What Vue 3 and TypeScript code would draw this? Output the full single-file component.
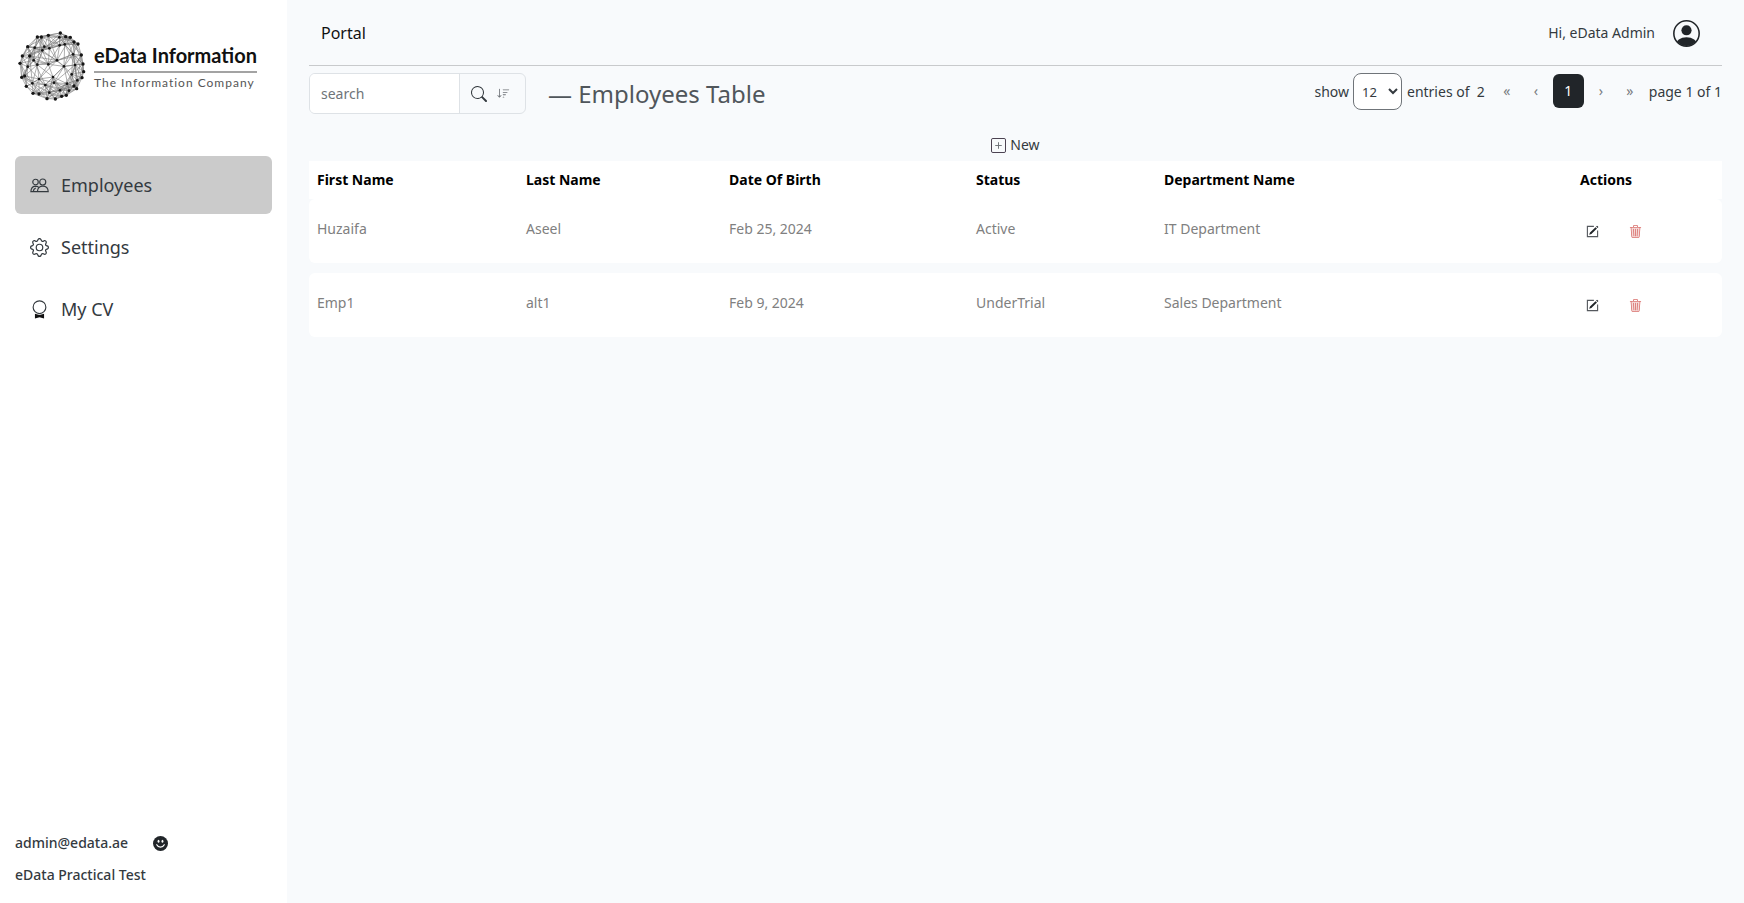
<script setup lang="ts">
import { computed, ref } from 'vue'

interface Employee {
  firstName: string
  lastName: string
  birth: string
  status: string
  department: string
}

const columns = ['First Name', 'Last Name', 'Date Of Birth', 'Status', 'Department Name', 'Actions']

const employees = ref<Employee[]>([
  { firstName: 'Huzaifa', lastName: 'Aseel', birth: 'Feb 25, 2024', status: 'Active', department: 'IT Department' },
  { firstName: 'Emp1', lastName: 'alt1', birth: 'Feb 9, 2024', status: 'UnderTrial', department: 'Sales Department' },
])

const query = ref('')
const pageSize = ref(12)

const visible = computed(() =>
  employees.value.filter((e) => Object.values(e).join(' ').toLowerCase().includes(query.value.toLowerCase())),
)

// Nodes of the logo's wireframe sphere: the outline first, then the inside.
const rim: number[][] = [
  [152, 24], [168, 35], [182, 37], [193, 51], [205, 57], [215, 90], [220, 117], [222, 140], [217, 158],
  [201, 191], [193, 183], [170, 211], [156, 214], [137, 222], [112, 221], [88, 207], [70, 205], [50, 184],
  [36, 157], [45, 153], [31, 115], [38, 93], [54, 65], [60, 93], [83, 36], [95, 36], [116, 31],
]
const inner: number[][] = [
  [72, 106], [142, 106], [150, 61], [165, 58], [104, 65], [119, 70], [98, 76], [116, 118], [83, 119],
  [163, 124], [186, 148], [88, 162], [133, 173], [172, 176], [151, 196], [107, 180], [130, 156],
  [190, 88], [196, 120], [203, 166], [75, 68], [149, 37], [54, 125], [119, 203], [178, 197], [68, 175],
]
const nodes = [...rim, ...inner]
const edges: number[][] = []
nodes.forEach((a, i) => {
  nodes.forEach((b, j) => {
    const reach = (i + j) % 3 === 0 ? 84 : 48
    if (j > i && Math.hypot(a[0] - b[0], a[1] - b[1]) < reach) edges.push([...a, ...b])
  })
})
</script>

<template>
  <div class="layout">
    <aside class="sidebar">
      <div class="brand">
        <svg class="globe" viewBox="26 18 202 210" aria-hidden="true">
          <g stroke="#222" stroke-width="1.8" opacity="0.6">
            <line v-for="(e, i) in edges" :key="i" :x1="e[0]" :y1="e[1]" :x2="e[2]" :y2="e[3]" />
          </g>
          <circle v-for="(n, i) in nodes" :key="i" :cx="n[0]" :cy="n[1]" :r="i < rim.length ? 5 : 4" fill="#151515" />
        </svg>
        <div class="brand-text">
          <span class="brand-name">eData Information</span>
          <span class="brand-tag">The Information Company</span>
        </div>
      </div>

      <nav class="menu">
        <a href="#employees" class="menu-item active" aria-current="page">
          <svg viewBox="0 0 20 20" fill="none" stroke="currentColor" stroke-width="1.2">
            <circle cx="5.800" cy="6.300" r="2.900" />
            <circle cx="13.400" cy="6.300" r="3.200" />
            <path d="M7.800 16.500c.2-4 2.200-5.900 5.700-5.900s5.500 1.900 5.700 5.900zM7.800 16.500H.9c.2-3.600 1.700-5.500 4.500-5.900 1.400 0 2.400.2 3.500 1" />
            <path d="M3.500 16.500c0-2 .9-3.300 2.600-3.900" />
          </svg>
          <span>Employees</span>
        </a>
        <a href="#settings" class="menu-item">
          <svg viewBox="0 0 16 16" fill="currentColor">
            <path d="M8 4.754a3.246 3.246 0 1 0 0 6.492 3.246 3.246 0 0 0 0-6.492M5.754 8a2.246 2.246 0 1 1 4.492 0 2.246 2.246 0 0 1-4.492 0" />
            <path d="M9.796 1.343c-.527-1.790-3.065-1.790-3.592 0l-.094.319a.873.873 0 0 1-1.255.520l-.292-.160c-1.640-.892-3.433.902-2.540 2.541l.159.292a.873.873 0 0 1-.520 1.255l-.319.094c-1.790.527-1.790 3.065 0 3.592l.319.094a.873.873 0 0 1 .520 1.255l-.160.292c-.892 1.640.901 3.434 2.541 2.540l.292-.159a.873.873 0 0 1 1.255.520l.094.319c.527 1.790 3.065 1.790 3.592 0l.094-.319a.873.873 0 0 1 1.255-.520l.292.160c1.640.893 3.434-.902 2.540-2.541l-.159-.292a.873.873 0 0 1 .520-1.255l.319-.094c1.790-.527 1.790-3.065 0-3.592l-.319-.094a.873.873 0 0 1-.520-1.255l.160-.292c.893-1.640-.902-3.433-2.541-2.540l-.292.159a.873.873 0 0 1-1.255-.520zm-2.633.283c.246-.835 1.428-.835 1.674 0l.094.319a1.873 1.873 0 0 0 2.693 1.115l.291-.160c.764-.415 1.600.420 1.184 1.185l-.159.292a1.873 1.873 0 0 0 1.116 2.692l.318.094c.835.246.835 1.428 0 1.674l-.319.094a1.873 1.873 0 0 0-1.115 2.693l.160.291c.415.764-.420 1.600-1.185 1.184l-.291-.159a1.873 1.873 0 0 0-2.693 1.116l-.094.318c-.246.835-1.428.835-1.674 0l-.094-.319a1.873 1.873 0 0 0-2.692-1.115l-.292.160c-.764.415-1.600-.420-1.184-1.185l.159-.291A1.873 1.873 0 0 0 1.945 8.930l-.319-.094c-.835-.246-.835-1.428 0-1.674l.319-.094A1.873 1.873 0 0 0 3.060 4.377l-.160-.292c-.415-.764.420-1.600 1.185-1.184l.292.159a1.873 1.873 0 0 0 2.692-1.115z" />
          </svg>
          <span>Settings</span>
        </a>
        <a href="#cv" class="menu-item">
          <svg viewBox="0 0 20 20" fill="none" stroke="currentColor" stroke-width="1.2">
            <circle cx="10" cy="7.600" r="6.700" />
            <path d="M5.200 14.400l4.800 1.300 4.800-1.300v5l-4.800-1.300-4.800 1.300z" fill="#111" stroke="none" />
          </svg>
          <span>My CV</span>
        </a>
      </nav>

      <footer class="account">
        <div class="account-row">
          <span>admin@edata.ae</span>
          <svg viewBox="0 0 16 16" aria-hidden="true">
            <circle cx="8" cy="8" r="8" fill="#212529" />
            <ellipse cx="5.900" cy="5.700" rx="1" ry="1.600" fill="#fff" />
            <ellipse cx="10.100" cy="5.700" rx="1" ry="1.600" fill="#fff" />
            <path d="M4 9.300c1.800 3.500 6.200 3.500 8 0" fill="none" stroke="#fff" stroke-width="1.300" stroke-linecap="round" />
          </svg>
        </div>
        <span>eData Practical Test</span>
      </footer>
    </aside>

    <main class="content">
      <header class="topbar">
        <a href="#portal" class="portal">Portal</a>
        <div class="user">
          <span>Hi, eData Admin</span>
          <svg viewBox="0 0 26 26" aria-hidden="true">
            <defs>
              <clipPath id="avatar"><circle cx="13" cy="13" r="12" /></clipPath>
            </defs>
            <circle cx="13" cy="13" r="12.200" fill="none" stroke="#212529" stroke-width="1.500" />
            <circle cx="13" cy="9.900" r="4.900" fill="#212529" />
            <ellipse cx="13" cy="24" rx="10.500" ry="7.300" fill="#212529" clip-path="url(#avatar)" />
          </svg>
        </div>
      </header>

      <section class="toolbar">
        <form class="search" role="search" @submit.prevent>
          <input v-model="query" type="search" placeholder="search" aria-label="Search employees" />
          <div class="search-actions">
            <button type="submit" aria-label="Search">
              <svg class="icon-search" viewBox="0 0 16 16" fill="currentColor">
                <path d="M11.742 10.344a6.500 6.500 0 1 0-1.397 1.398h-.001q.044.060.098.115l3.850 3.850a1 1 0 0 0 1.415-1.414l-3.850-3.850a1 1 0 0 0-.115-.100zM12 6.500a5.500 5.500 0 1 1-11 0 5.500 5.500 0 0 1 11 0" />
              </svg>
            </button>
            <button type="button" aria-label="Sort">
              <svg class="icon-sort" viewBox="0 0 16 16" fill="currentColor">
                <path d="M3.500 2.500a.5.500 0 0 0-1 0v8.793l-1.146-1.147a.5.500 0 0 0-.708.708l2 1.999.007.007a.497.497 0 0 0 .7-.006l2-2a.5.500 0 0 0-.707-.708L3.500 11.293zm3.500 1a.5.500 0 0 1 .5-.5h7a.5.500 0 0 1 0 1h-7a.5.500 0 0 1-.5-.5M7.500 6a.5.500 0 0 0 0 1h5a.5.500 0 0 0 0-1zm0 3a.5.500 0 0 0 0 1h3a.5.500 0 0 0 0-1zm0 3a.5.500 0 0 0 0 1h1a.5.500 0 0 0 0-1z" />
              </svg>
            </button>
          </div>
        </form>
        <h1>— Employees Table</h1>

        <div class="paging">
          <label for="page-size">show</label>
          <select id="page-size" v-model="pageSize">
            <option :value="12">12</option>
            <option :value="24">24</option>
            <option :value="48">48</option>
          </select>
          <span class="entries">entries of&nbsp; {{ employees.length }}</span>
          <nav class="pages" aria-label="Pages">
            <button type="button" aria-label="First page">«</button>
            <button type="button" aria-label="Previous page">‹</button>
            <button type="button" class="current" aria-current="page">1</button>
            <button type="button" aria-label="Next page">›</button>
            <button type="button" aria-label="Last page">»</button>
          </nav>
          <span>page 1 of 1</span>
        </div>
      </section>

      <button type="button" class="new">
        <svg viewBox="0 0 16 16" fill="none" aria-hidden="true">
          <rect x="0.500" y="0.500" width="15" height="15" rx="1.500" stroke="#3a3040" />
          <path d="M8 4.500v7M4.500 8h7" stroke="#6c7075" />
        </svg>
        New
      </button>

      <table>
        <colgroup>
          <col class="c-first" /><col class="c-last" /><col class="c-birth" /><col class="c-status" /><col /><col class="c-actions" />
        </colgroup>
        <thead>
          <tr>
            <th v-for="c in columns" :key="c" scope="col">{{ c }}</th>
          </tr>
        </thead>
        <tbody v-for="(e, i) in visible" :key="e.firstName">
          <tr v-if="i > 0" class="gap" aria-hidden="true"><td colspan="6"></td></tr>
          <tr class="record">
            <td>{{ e.firstName }}</td>
            <td>{{ e.lastName }}</td>
            <td>{{ e.birth }}</td>
            <td>{{ e.status }}</td>
            <td>{{ e.department }}</td>
            <td>
              <div class="actions">
                <button type="button" class="edit" :aria-label="`Edit ${e.firstName}`">
                  <svg viewBox="0 0 14 14" fill="none">
                    <path d="M8.500 1.500H1.500v11h11V6" stroke="#55595e" stroke-width="1.200" />
                    <path d="M11.900.700l1.500 1.400-1 1-1.500-1.400zM10.300 2.300l1.500 1.500-6 5.900-2.400.900.900-2.400z" fill="#212529" />
                  </svg>
                </button>
                <button type="button" class="delete" :aria-label="`Delete ${e.firstName}`">
                  <svg viewBox="0 0 16 16" fill="currentColor">
                    <path d="M3 3.500h10l-.900 12H3.900z" opacity="0.250" />
                    <path d="M6.500 1h3a.5.500 0 0 1 .5.500v1H6v-1a.5.500 0 0 1 .5-.5M11 2.500v-1A1.500 1.500 0 0 0 9.500 0h-3A1.500 1.500 0 0 0 5 1.500v1H1.500a.5.500 0 0 0 0 1h.538l.853 10.660A2 2 0 0 0 4.885 16h6.230a2 2 0 0 0 1.994-1.840l.853-10.660h.538a.5.500 0 0 0 0-1zm1.958 1-.846 10.580a1 1 0 0 1-.997.920h-6.230a1 1 0 0 1-.997-.920L3.042 3.500zm-7.487 1a.5.500 0 0 1 .528.470l.5 8.500a.5.500 0 0 1-.998.060L5 5.030a.5.500 0 0 1 .470-.530m5.058 0a.5.500 0 0 1 .470.530l-.5 8.500a.5.500 0 1 1-.998-.060l.5-8.500a.5.500 0 0 1 .528-.470M8 4.500a.5.500 0 0 1 .5.500v8.500a.5.500 0 0 1-1 0V5a.5.500 0 0 1 .5-.5" />
                  </svg>
                </button>
              </div>
            </td>
          </tr>
        </tbody>
      </table>
    </main>
  </div>
</template>

<style>
body {
  background: #f8fafc;
}
</style>

<style scoped>
.layout {
  display: flex;
  min-height: 100vh;
  font-family: "Segoe UI", "Noto Sans", "Open Sans", sans-serif;
  font-size: 14px;
  line-height: 20px;
  color: #343a3f;
}
.layout * {
  box-sizing: border-box;
}
button,
input,
select {
  font: inherit;
  color: inherit;
}
button {
  border: 0;
  padding: 0;
  background: none;
  cursor: pointer;
}
a {
  color: inherit;
  text-decoration: none;
}
svg {
  display: block;
  flex: none;
}

.sidebar {
  display: flex;
  flex: none;
  flex-direction: column;
  width: 287px;
  padding: 31px 15px 18px;
  background: #fff;
}
.brand {
  display: flex;
  align-items: center;
  gap: 8px;
  padding-left: 3px;
  margin-bottom: 55px;
}
.globe {
  width: 68px;
  height: 70px;
}
.brand-text {
  display: flex;
  flex-direction: column;
  padding-top: 4px;
  white-space: nowrap;
}
.brand-name {
  padding-bottom: 4px;
  border-bottom: 2px solid #a3a3a3;
  font-family: Lato, sans-serif;
  font-size: 20px;
  font-weight: 700;
  line-height: 24px;
  color: #111;
}
.brand-tag {
  font-family: Lato, sans-serif;
  font-size: 12px;
  letter-spacing: 1px;
  line-height: 20px;
  color: #555;
}

.menu {
  display: flex;
  flex-direction: column;
  gap: 4px;
}
.menu-item {
  display: flex;
  align-items: center;
  gap: 12px;
  height: 58px;
  padding: 0 15px;
  border-radius: 6px;
  font-size: 18px;
}
.menu-item svg {
  width: 19px;
  height: 19px;
}
.menu-item.active {
  background: #cbcbcb;
}

.account {
  display: flex;
  flex-direction: column;
  gap: 12px;
  margin-top: auto;
  font-weight: 500;
}
.account-row {
  display: flex;
  align-items: center;
  gap: 25px;
}
.account-row svg {
  width: 15px;
  height: 15px;
}

.content {
  display: flex;
  flex: 1;
  flex-direction: column;
  min-width: 0;
  padding: 0 22px;
}
.topbar {
  display: flex;
  align-items: center;
  justify-content: space-between;
  height: 66px;
  padding: 1px 22px 0 12px;
  border-bottom: 1px solid #c8cacc;
}
.portal {
  font-size: 16px;
  color: #111;
}
.user {
  display: flex;
  align-items: center;
  gap: 18px;
}
.user svg {
  width: 27px;
  height: 27px;
}

.toolbar {
  display: flex;
  align-items: flex-start;
  padding-top: 7px;
}
.search {
  display: flex;
  width: 217px;
  height: 41px;
  border: 1px solid #dee2e6;
  border-radius: 6px;
  overflow: hidden;
}
.search input {
  flex: 1;
  min-width: 0;
  padding: 0 11px;
  border: 0;
  border-right: 1px solid #dee2e6;
  background: #fff;
}
.search input::placeholder {
  color: #6f7479;
  opacity: 1;
}
.search-actions {
  display: flex;
  align-items: center;
  gap: 10px;
  width: 65px;
  padding-left: 11px;
}
.icon-search {
  width: 16px;
  height: 16px;
}
.icon-sort {
  width: 13px;
  height: 13px;
  color: #6c7075;
}
h1 {
  margin: 0 0 0 22px;
  font-size: 24px;
  font-weight: 400;
  line-height: 41px;
  color: #50565b;
}
.paging {
  display: flex;
  align-items: center;
  margin-left: auto;
}
select {
  width: 49px;
  height: 37px;
  margin: 0 5px 0 4px;
  padding: 0 0 0 4px;
  border: 1px solid #6f7479;
  border-radius: 8px;
  background: #fff;
  font-size: 13px;
}
.pages {
  display: flex;
  align-items: center;
  gap: 5px;
  margin: 0 7px 2px 10px;
}
.pages button {
  width: 24px;
  height: 34px;
  color: #777b80;
}
.pages .current {
  width: 31px;
  border-radius: 6px;
  background: #212529;
  color: #fff;
}

.new {
  display: flex;
  align-items: center;
  align-self: center;
  gap: 4px;
  height: 20px;
  margin: 21px 0 6px;
}
.new svg {
  width: 15px;
  height: 15px;
}

table {
  width: 100%;
  table-layout: fixed;
  border-spacing: 0;
}
.c-first {
  width: 209px;
}
.c-last {
  width: 203px;
}
.c-birth {
  width: 247px;
}
.c-status {
  width: 188px;
}
.c-actions {
  width: 150px;
}
th {
  height: 38px;
  padding: 0 8px;
  background: #fff;
  font-weight: 700;
  text-align: left;
  color: #000;
}
.record td {
  height: 64px;
  padding: 0 8px 4px;
  background: #fff;
  color: #808080;
}
.record td:first-child {
  border-radius: 6px 0 0 6px;
}
.record td:last-child {
  padding-bottom: 0;
  border-radius: 0 6px 6px 0;
}
.gap td {
  height: 10px;
  padding: 0;
}
.actions {
  display: flex;
  gap: 30px;
  padding-left: 6px;
}
.actions svg {
  width: 13px;
  height: 13px;
}
.delete {
  color: #d9706c;
}
</style>
